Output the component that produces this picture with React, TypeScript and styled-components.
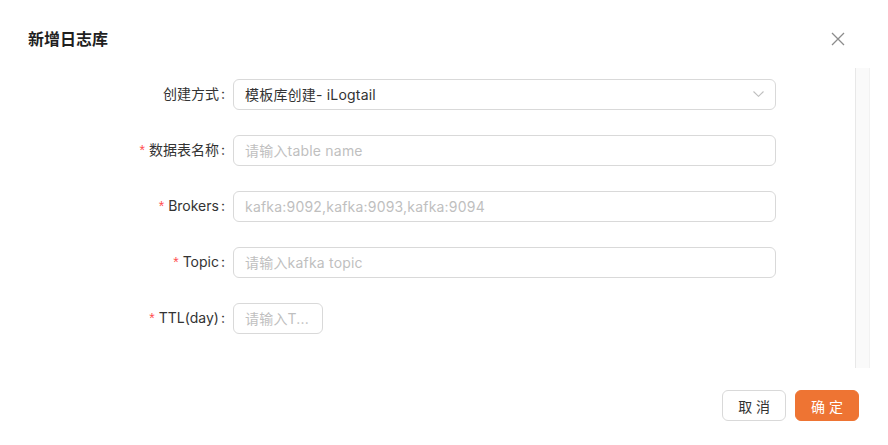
import React from 'react';
import styled, { createGlobalStyle } from 'styled-components';

const GlobalStyle = createGlobalStyle`
  html, body {
    margin: 0;
    padding: 0;
    background: #fff;
  }
  body {
    font-family: Inter, "Noto Sans CJK SC", sans-serif;
    color: #333;
  }
  * { box-sizing: border-box; }
`;

const Dialog = styled.div`
  width: 888px;
  height: 445px;
  background: #fff;
  display: flex;
  flex-direction: column;
`;

const Header = styled.div`
  display: flex;
  align-items: center;
  justify-content: space-between;
  padding: 28px 43px 18px 28px;
`;

const Title = styled.div`
  font-size: 16px;
  line-height: 22px;
  font-weight: 600;
  color: #1f1f1f;
`;

const CloseButton = styled.button`
  border: none;
  background: none;
  padding: 0;
  width: 14px;
  height: 14px;
  display: flex;
  align-items: center;
  justify-content: center;
  color: #8c8c8c;
  cursor: pointer;
`;

const Body = styled.div`
  height: 300px;
  margin-right: 18px;
  display: flex;
`;

const Content = styled.div`
  flex: 1;
  padding-top: 11px;
`;

const ScrollTrack = styled.div`
  width: 15px;
  background: #fafafa;
  border-left: 1px solid #e8e8e8;
  border-right: 1px solid #f2f2f2;
`;

const Form = styled.div`
  display: grid;
  grid-template-columns: 225px 543px;
  column-gap: 8px;
  row-gap: 25px;
  align-items: center;
`;

const Label = styled.label`
  font-size: 14px;
  line-height: 20px;
  color: #333;
  text-align: right;
  white-space: nowrap;
  padding-bottom: 2px;
`;

const Required = styled.span`
  color: #ff4d4f;
  margin-right: 4px;
  font-family: SimSun, sans-serif;
`;

const Colon = styled.span`
  margin-left: 2px;
`;

const Field = styled.div<{ $width?: number }>`
  height: 31px;
  width: ${({ $width }) => ($width ? `${$width}px` : '100%')};
  border: 1px solid #d9d9d9;
  border-radius: 6px;
  padding: 0 11px 1px;
  display: flex;
  align-items: center;
  justify-content: space-between;
  font-size: 14px;
  letter-spacing: 0.2px;
  background: #fff;
  overflow: hidden;
`;

const Value = styled.span`
  color: #333;
  white-space: nowrap;
`;

const Placeholder = styled.span`
  color: #bfbfbf;
  white-space: nowrap;
  overflow: hidden;
  text-overflow: ellipsis;
`;

const Footer = styled.div`
  display: flex;
  justify-content: flex-end;
  gap: 9px;
  padding: 22px 29px 0 0;
`;

const Button = styled.button<{ $primary?: boolean }>`
  height: 31px;
  padding: 0 15px;
  border-radius: 6px;
  font-size: 14px;
  font-family: inherit;
  cursor: pointer;
  border: 1px solid ${({ $primary }) => ($primary ? '#ee7433' : '#d9d9d9')};
  background: ${({ $primary }) => ($primary ? '#ee7433' : '#fff')};
  color: ${({ $primary }) => ($primary ? '#fff' : '#333')};
`;

const fields = [
  { label: '数据表名称', placeholder: '请输入table name' },
  { label: 'Brokers', placeholder: 'kafka:9092,kafka:9093,kafka:9094' },
  { label: 'Topic', placeholder: '请输入kafka topic' },
];

export default function App() {
  return (
    <>
      <GlobalStyle />
      <Dialog>
        <Header>
          <Title>新增日志库</Title>
          <CloseButton aria-label="close">
            <svg width="14" height="14" viewBox="0 0 14 14" fill="none" stroke="currentColor" strokeWidth="1.3">
              <path d="M1 1 L13 13 M13 1 L1 13" />
            </svg>
          </CloseButton>
        </Header>
        <Body>
          <Content>
            <Form>
              <Label>
                创建方式<Colon>:</Colon>
              </Label>
              <Field>
                <Value>模板库创建- iLogtail</Value>
                <svg width="11" height="6" viewBox="0 0 11 6" fill="none" stroke="#bfbfbf" strokeWidth="1.1">
                  <path d="M0.5 0.5 L5.5 5.3 L10.5 0.5" />
                </svg>
              </Field>
              {fields.map((f) => (
                <React.Fragment key={f.label}>
                  <Label>
                    <Required>*</Required>
                    {f.label}
                    <Colon>:</Colon>
                  </Label>
                  <Field>
                    <Placeholder>{f.placeholder}</Placeholder>
                  </Field>
                </React.Fragment>
              ))}
              <Label>
                <Required>*</Required>
                TTL(day)
                <Colon>:</Colon>
              </Label>
              <Field $width={90}>
                <Placeholder>请输入T...</Placeholder>
              </Field>
            </Form>
          </Content>
          <ScrollTrack />
        </Body>
        <Footer>
          <Button>取 消</Button>
          <Button $primary>确 定</Button>
        </Footer>
      </Dialog>
    </>
  );
}
